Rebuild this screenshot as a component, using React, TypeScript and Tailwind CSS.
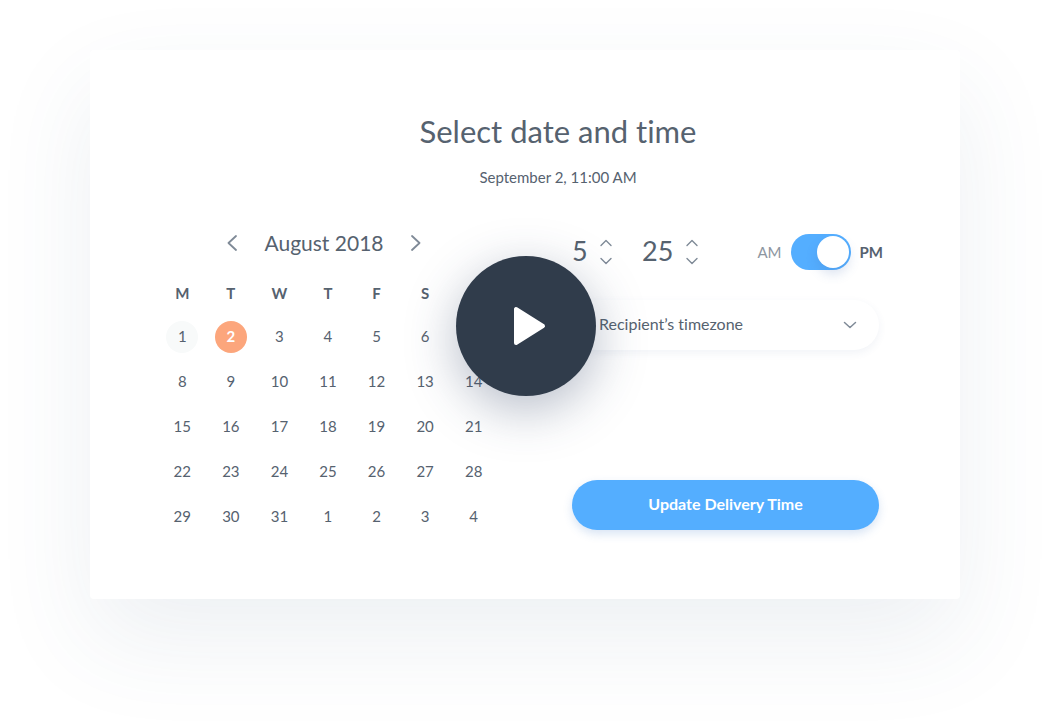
import { useState } from "react";

const weekDays = ["M", "T", "W", "T", "F", "S", "S"];

const weeks = [
  [1, 2, 3, 4, 5, 6, 7],
  [8, 9, 10, 11, 12, 13, 14],
  [15, 16, 17, 18, 19, 20, 21],
  [22, 23, 24, 25, 26, 27, 28],
  [29, 30, 31, 1, 2, 3, 4],
];

function Chevron({ d, box, className }: { d: string; box: string; className: string }) {
  return (
    <svg
      viewBox={box}
      className={className}
      fill="none"
      stroke="currentColor"
      strokeLinecap="round"
      strokeLinejoin="round"
      aria-hidden="true"
    >
      <path d={d} />
    </svg>
  );
}

function Calendar() {
  const [selected, setSelected] = useState(1);

  return (
    <section aria-label="Calendar">
      <div className="flex h-8 items-center justify-center gap-5 pr-2">
        <button type="button" aria-label="Previous month" className="flex w-5 justify-center text-[#7f8a97]">
          <Chevron box="0 0 10 16" d="M9 1L1.500 8L9 15" className="h-4 w-2.5 stroke-[1.8]" />
        </button>
        <h2 className="w-[124px] text-center text-[21px] leading-8 whitespace-nowrap">August 2018</h2>
        <button type="button" aria-label="Next month" className="flex w-5 justify-center text-[#7f8a97]">
          <Chevron box="0 0 10 16" d="M1 1L8.500 8L1 15" className="h-4 w-2.5 stroke-[1.8]" />
        </button>
      </div>
      <table className="mt-3.5 w-full table-fixed border-collapse text-center text-[15px]">
        <thead>
          <tr className="h-10">
            {weekDays.map((day, i) => (
              <th key={i} scope="col" className="p-0 font-bold">
                {day}
              </th>
            ))}
          </tr>
        </thead>
        <tbody>
          {weeks.map((week, w) => (
            <tr key={w} className="h-[45px]">
              {week.map((day, d) => {
                const index = w * 7 + d;
                const tone =
                  index === selected
                    ? "bg-[#fca67c] font-bold text-white"
                    : index === 0
                      ? "bg-[#f8fafa]"
                      : "";
                return (
                  <td key={d} className="p-0 pt-0.5">
                    <button
                      type="button"
                      onClick={() => setSelected(index)}
                      aria-pressed={index === selected}
                      className={`mx-auto flex size-8 items-center justify-center rounded-full pb-0.5 leading-5 ${tone}`}
                    >
                      {day}
                    </button>
                  </td>
                );
              })}
            </tr>
          ))}
        </tbody>
      </table>
    </section>
  );
}

function TimeField({
  label,
  value,
  max,
  width,
  onChange,
}: {
  label: string;
  value: number;
  max: number;
  width: string;
  onChange: (value: number) => void;
}) {
  return (
    <div className="flex items-center gap-3">
      <input
        type="text"
        inputMode="numeric"
        aria-label={label}
        value={value}
        onChange={(e) => onChange(Math.min(max, Number(e.target.value) || 0))}
        className={`bg-transparent p-0 pb-0.5 text-[27px] leading-9 outline-none ${width}`}
      />
      <div className="flex flex-col gap-2.5 text-[#7f8a97]">
        <button type="button" aria-label={`Increase ${label}`} onClick={() => onChange(Math.min(max, value + 1))}>
          <Chevron box="0 0 12 8" d="M1 6.500L6 1.500L11 6.500" className="h-2 w-3 stroke-[1.4]" />
        </button>
        <button type="button" aria-label={`Decrease ${label}`} onClick={() => onChange(Math.max(0, value - 1))}>
          <Chevron box="0 0 12 8" d="M1 1.500L6 6.500L11 1.500" className="h-2 w-3 stroke-[1.4]" />
        </button>
      </div>
    </div>
  );
}

function TimeForm() {
  const [hour, setHour] = useState(5);
  const [minute, setMinute] = useState(25);
  const [pm, setPm] = useState(true);

  return (
    <form className="pt-[7px]" onSubmit={(e) => e.preventDefault()}>
      <div className="-mr-1 flex h-9 items-center justify-between">
        <div className="flex items-center gap-[30px]">
          <TimeField label="hour" value={hour} max={12} width="w-4" onChange={setHour} />
          <TimeField label="minute" value={minute} max={59} width="w-8" onChange={setMinute} />
        </div>
        <label className="flex cursor-pointer items-center gap-[9px] text-[15px]">
          <span className="text-[#8d96a1]">AM</span>
          <input
            type="checkbox"
            role="switch"
            aria-label="PM"
            checked={pm}
            onChange={(e) => setPm(e.target.checked)}
            className="peer sr-only"
          />
          <span className="flex h-9 w-[60px] items-center rounded-full bg-[#54aeff] p-0.5 peer-checked:justify-end">
            <span className="size-8 rounded-full bg-white shadow-[0_6px_12px_rgba(70,110,180,0.2)]" />
          </span>
          <span className="font-bold">PM</span>
        </label>
      </div>

      <div className="relative mt-[30px]">
        <select
          aria-label="Timezone"
          className="h-[50px] w-full appearance-none rounded-full bg-white pb-0.5 pl-[27px] text-base shadow-[0_3px_8px_rgba(60,90,140,0.07)] outline-none"
        >
          <option>Recipient’s timezone</option>
          <option>My timezone</option>
        </select>
        <span className="pointer-events-none absolute inset-y-0 right-[22px] flex items-center text-[#7f8a97]">
          <Chevron box="0 0 14 8" d="M1.500 1.500L7 6.500L12.500 1.500" className="h-2 w-3.5 stroke-[1.5]" />
        </span>
      </div>

      <button
        type="submit"
        className="mt-[130px] h-[50px] w-full rounded-full bg-[#54aeff] pb-0.5 text-base font-bold text-white shadow-[0_4px_10px_rgba(60,120,200,0.2)]"
      >
        Update Delivery Time
      </button>
    </form>
  );
}

export default function App() {
  return (
    <main className="min-h-screen overflow-hidden bg-white pt-[50px] pr-[88px] pb-32 pl-[90px] font-['Lato','Open_Sans',sans-serif] text-[#56626f] [font-variant-ligatures:none]">
      <div className="relative rounded bg-white pt-[61px] pr-[81px] pb-[61px] pl-[68px] shadow-[0_40px_100px_rgba(50,90,125,0.09)]">
        <header className="pl-[79px] text-center">
          <h1 className="text-[31px] leading-10">Select date and time</h1>
          <p className="mt-3.5 text-[15px] leading-6">September 2, 11:00 AM</p>
        </header>

        <div className="mt-[38px] grid grid-cols-[340fr_307fr] gap-[74px]">
          <Calendar />
          <TimeForm />
        </div>

        <div className="pointer-events-none absolute inset-0 flex items-center justify-center pt-[3px] pl-0.5">
          <button
            type="button"
            aria-label="Play video"
            className="pointer-events-auto flex size-[140px] items-center justify-center rounded-full bg-[#303c4b] shadow-[0_14px_50px_rgba(48,66,100,0.35)]"
          >
            <svg viewBox="0 0 38 40" className="ml-2 h-10 w-[38px] fill-white stroke-white" aria-hidden="true">
              <path d="M5 3V37L32 20Z" strokeWidth="4" strokeLinejoin="round" />
            </svg>
          </button>
        </div>
      </div>
    </main>
  );
}
